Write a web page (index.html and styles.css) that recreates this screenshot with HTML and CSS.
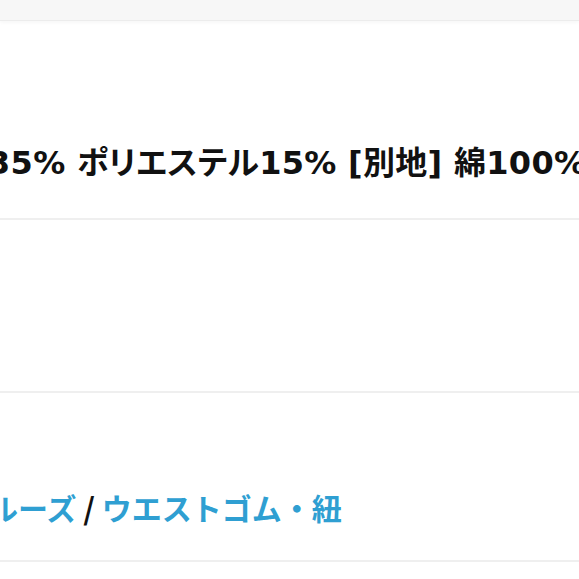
FILE: index.html
```html
<!DOCTYPE html>
<html lang="ja">
<head>
<meta charset="utf-8">
<link rel="stylesheet" href="styles.css">
</head>
<body>
<div class="topbar"></div>
<div class="row row-material">
  <p class="value">35% ポリエステル15% [別地] 綿100%</p>
</div>
<div class="row row-empty"></div>
<div class="row row-tags">
  <p class="tags"><a class="tag">ルーズ</a> / <a class="tag">ウエストゴム・紐</a></p>
</div>
</body>
</html>
```
FILE: styles.css
```css
html, body {
  margin: 0;
  padding: 0;
  background: #ffffff;
}
body {
  width: 579px;
  height: 579px;
  overflow: hidden;
  font-family: "Noto Sans CJK JP", "Noto Sans", sans-serif;
  color: #111;
}
.topbar {
  height: 20px;
  background: #f7f7f7;
  border-bottom: 1px solid #ececec;
  box-shadow: 0 2px 3px rgba(0,0,0,0.03);
}
.row {
  box-sizing: border-box;
  border-bottom: 2px solid #efefef;
  display: flex;
  align-items: flex-end;
  white-space: nowrap;
  overflow: hidden;
}
.row-material {
  height: 199px;
  padding-bottom: 37px;
}
.row-empty {
  height: 173px;
}
.row-tags {
  height: 169px;
  padding-bottom: 35px;
}
.value, .tags {
  margin: 0;
  font-weight: 700;
  line-height: 36px;
}
.value {
  font-family: "DejaVu Sans", "Noto Sans CJK JP", sans-serif;
  font-size: 32px;
  margin-left: -12px;
  letter-spacing: 0.3px;
  font-feature-settings: "palt";
}
.tags {
  font-size: 30px;
  margin-left: -12px;
  color: #111;
}
.tag {
  color: #2f9fd2;
}
```
